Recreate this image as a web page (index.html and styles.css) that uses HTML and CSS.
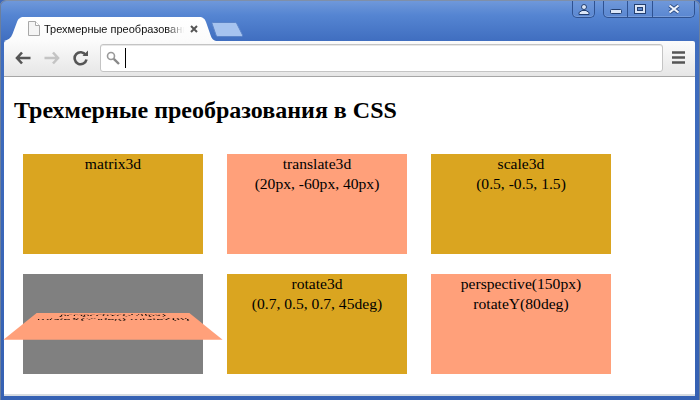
FILE: index.html
```html
<!DOCTYPE html>
<html lang="ru">
<head>
<meta charset="utf-8">
<title>Трехмерные преобразования в CSS</title>
<link rel="stylesheet" href="styles.css">
</head>
<body>
<div class="window">
  <header class="frame">
    <div class="tab">
      <svg class="tab-shape" width="212" height="24" viewBox="0 0 212 24">
        <defs><linearGradient id="tabfill" x1="0" y1="0" x2="0" y2="1"><stop offset="0" stop-color="#ffffff"/><stop offset="1" stop-color="#fbfbfb"/></linearGradient></defs>
        <path d="M0 24C4 23 7 21 8.500 17L13 5C14 2 16 0 20 0H195C199 0 201 2 202 5L206.500 18C207.500 21 209 23.500 212 24Z" fill="url(#tabfill)"/>
      </svg>
      <svg class="page-icon" width="12" height="15" viewBox="0 0 12 15">
        <path d="M.5.500H7.500L11.500 4.500V14.500H.5Z" fill="#f4f4f4" stroke="#a8a8a8"/>
        <path d="M7.500.500V4.500H11.500" fill="#fff" stroke="#a8a8a8"/>
      </svg>
      <span class="tab-title">Трехмерные преобразования в CSS</span>
      <svg class="tab-close" width="8" height="8" viewBox="0 0 8 8">
        <path d="M1 1L7 7M7 1L1 7" stroke="#555" stroke-width="2"/>
      </svg>
    </div>
    <svg class="new-tab" width="32" height="15" viewBox="0 0 32 15">
      <path d="M1 1.500C1 1 1.500.5 2 .5H24C25 .5 25.500 1 26 2L31.500 13C31.800 14 31 14.500 30 14.500H7C6 14.500 5.500 14 5 13Z" fill="#a6c3ef" stroke="#5b84c8"/>
    </svg>
    <div class="controls">
      <div class="ctl ctl-user">
        <svg width="12" height="11" viewBox="0 0 12 11"><circle cx="6" cy="3" r="2.500" fill="#dbe6f7" stroke="#233f70"/><path d="M1 10.500V8.500L4 6.500H8L11 8.500V10.500Z" fill="#dbe6f7" stroke="#233f70"/></svg>
      </div>
      <div class="ctl-group">
        <div class="ctl ctl-min"><svg class="icon-low" width="12" height="6" viewBox="0 0 12 6"><rect x=".5" y=".5" width="11" height="4" rx="1" fill="#dbe6f7" stroke="#233f70"/></svg></div>
        <div class="ctl ctl-max"><svg width="12" height="10" viewBox="0 0 12 10"><rect x=".5" y=".5" width="11" height="9" fill="#dbe6f7" stroke="#233f70"/><rect x="3.500" y="3.500" width="5" height="3" fill="#5c86cc" stroke="#233f70"/></svg></div>
        <div class="ctl ctl-close"><svg width="14" height="10" viewBox="0 0 14 10"><path d="M2.500 1.500L11.500 8.500M11.500 1.500L2.500 8.500" fill="none" stroke="#2a4a82" stroke-width="3.800"/><path d="M2.500 1.500L11.500 8.500M11.500 1.500L2.500 8.500" fill="none" stroke="#eef3fb" stroke-width="2.200"/></svg></div>
      </div>
    </div>
  </header>
  <nav class="toolbar">
    <svg class="nav-icon" width="16" height="14" viewBox="0 0 16 14"><path d="M7 1.500L2 7L7 12.500M2.500 7H15.500" fill="none" stroke="#555" stroke-width="2.600"/></svg>
    <svg class="nav-icon" width="16" height="14" viewBox="0 0 16 14"><path d="M9 1.500L14 7L9 12.500M13.500 7H.5" fill="none" stroke="#c4c4c4" stroke-width="2.600"/></svg>
    <svg class="nav-icon" width="16" height="16" viewBox="0 0 16 16"><path d="M12.700 5A6 6 0 1 0 13.500 9.500" fill="none" stroke="#555" stroke-width="2.600"/><path d="M9.500 6H15V.5Z" fill="#555"/></svg>
    <div class="omnibox">
      <svg class="search" width="14" height="14" viewBox="0 0 14 14"><circle cx="5" cy="5" r="3.500" fill="#fff" stroke="#999" stroke-width="1.600"/><path d="M7.800 7.800L13 13" stroke="#888" stroke-width="2.400"/></svg>
      <span class="caret"></span>
    </div>
    <svg class="menu" width="13" height="13" viewBox="0 0 13 13"><path d="M0 1.500H13M0 6.500H13M0 11.500H13" stroke="#555" stroke-width="2.600"/></svg>
  </nav>
  <main class="page">
    <h1>Трехмерные преобразования в CSS</h1>
    <div class="grid">
      <div class="box gold">matrix3d</div>
      <div class="box salmon">translate3d<br>(20px, -60px, 40px)</div>
      <div class="box gold">scale3d<br>(0.5, -0.5, 1.5)</div>
      <div class="box grey"><div class="box salmon tilted">perspective(270px)<br>rotateX(75deg) rotateZ(0)</div></div>
      <div class="box gold">rotate3d<br>(0.7, 0.5, 0.7, 45deg)</div>
      <div class="box salmon">perspective(150px)<br>rotateY(80deg)</div>
    </div>
  </main>
</div>
</body>
</html>
```

FILE: styles.css
```css
* { box-sizing: border-box; }
html, body { margin: 0; padding: 0; }
body { width: 700px; height: 400px; overflow: hidden; background: #3d68b8; }

.window {
  width: 700px;
  height: 400px;
  display: flex;
  flex-direction: column;
  padding: 0 5px 4px 4px;
  background: linear-gradient(#6f98da 0, #5585d2 14px, #3f6dbf 41px, #3561b3 100%);
  border-top: 1px solid #7f8fa8;
  border-radius: 6px 6px 0 0;
  box-shadow: inset 1px 0 0 #6c7f9c, inset -1px 0 0 #6c7f9c;
}

.frame {
  height: 40px;
  flex: none;
  display: flex;
  align-items: flex-start;
  padding-top: 16px;
}

.tab {
  position: relative;
  width: 212px;
  height: 24px;
  flex: none;
  display: flex;
  align-items: center;
  padding: 0 0 2px 24px;
  font: 11px/14px "Liberation Sans", sans-serif;
  color: #111;
}
.tab-shape { position: absolute; left: 0; top: 0; }
.page-icon { position: relative; flex: none; }
.tab-title {
  position: relative;
  width: 140px;
  margin: 1px 0 0 4px;
  white-space: nowrap;
  overflow: hidden;
  -webkit-mask-image: linear-gradient(90deg, #000 88%, transparent 100%);
  mask-image: linear-gradient(90deg, #000 88%, transparent 100%);
}
.tab-close { position: relative; flex: none; margin-left: 6px; margin-top: 1px; }
.new-tab { flex: none; margin: 5px 0 0 -5px; }

.controls {
  margin: -16px 0 0 auto;
  display: flex;
  gap: 8px;
}
.ctl {
  height: 17px;
  display: flex;
  align-items: center;
  justify-content: center;
  border: 1px solid #2f5291;
  border-top: 0;
  background: linear-gradient(#6f98da, #5a87d1);
  box-shadow: inset 0 -1px 0 rgba(255,255,255,.18);
}
.ctl-user { width: 23px; border-radius: 0 0 5px 5px; }
.ctl-group { display: flex; }
.ctl-min { width: 25px; border-radius: 0 0 0 5px; }
.ctl-max { width: 25px; border-left: 0; }
.ctl-close { width: 42px; border-left: 0; border-radius: 0 0 5px 0; }
.icon-low { margin-top: 5px; }

.toolbar {
  height: 35px;
  flex: none;
  display: flex;
  align-items: center;
  padding: 0 10px 2px 11px;
  background: linear-gradient(#fbfbfb, #e6e6e6);
  border-radius: 2px 2px 0 0;
  gap: 13px;
}
.nav-icon { flex: none; }
.omnibox {
  flex: none;
  width: 563px;
  height: 28px;
  margin-left: -2px;
  display: flex;
  align-items: center;
  padding-left: 5px;
  background: #fff;
  border: 1px solid #c4c4c4;
  border-radius: 3px;
  box-shadow: inset 0 1px 0 #e8e8e8;
}
.search { flex: none; }
.caret { width: 1px; height: 20px; margin-left: 5px; background: #000; }
.menu { flex: none; margin-left: -4px; }

.page {
  flex: 1;
  min-height: 0;
  padding: 0 0 0 10px;
  background: #fff;
  border-top: 1px solid #a6a6a6;
  box-shadow: inset 0 -2px 0 #d6dbe0;
  font: 15.6px/20px "Liberation Serif", serif;
  color: #000;
}
h1 {
  margin: 20px 0 30px;
  font: bold 24px/27px "Liberation Serif", serif;
}
.grid {
  margin-left: 9px;
  display: grid;
  grid-template-columns: repeat(3, 180px);
  grid-auto-rows: 100px;
  gap: 20px 24px;
}
.box { height: 100px; text-align: center; }
.gold { background: #daa520; }
.salmon { background: #ffa07a; }
.grey { background: #808080; }
.tilted { transform: perspective(270px) rotateX(75deg); will-change: transform; }
```
